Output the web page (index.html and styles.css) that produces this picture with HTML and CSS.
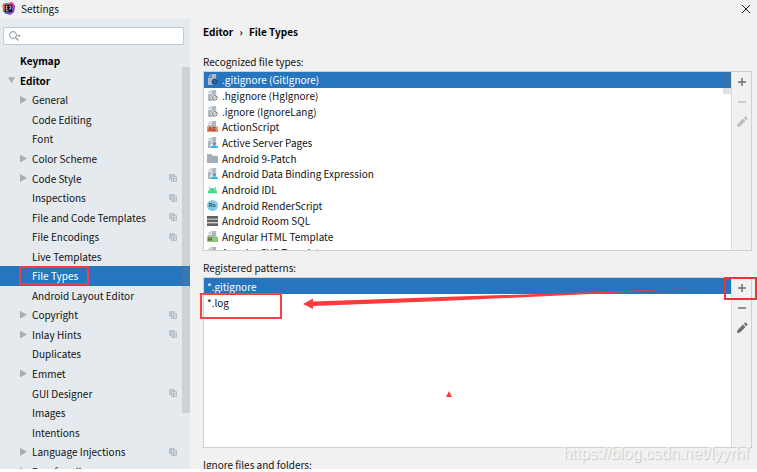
FILE: index.html
```html
<!DOCTYPE html>
<html lang="en">
<head>
  <meta charset="UTF-8">
  <meta name="viewport" content="width=device-width, initial-scale=1.0">
  <title>Settings</title>
  <link rel="stylesheet" href="styles.css">
</head>
<body>
  <!-- shared icons -->
  <svg class="sprite" aria-hidden="true">
    <symbol id="copy" viewBox="0 0 8 8">
      <path d="M0 0h6v2H2v4H0z" fill="#bcc5cc"/>
      <path d="M2.500 2.500h5v5h-5z" fill="#d3dae0" stroke="#b5bfc6"/>
      <path d="M4 4h2v1H4zM4 4h1v3H4z" fill="#a9b4bc"/>
    </symbol>
    <symbol id="page" viewBox="0 0 12 12">
      <path d="M5 0h5v12H1V4h4z" fill="#adb8c0"/>
      <path d="M4 0v3H1z" fill="#adb8c0"/>
    </symbol>
    <symbol id="ignored" viewBox="0 0 12 12">
      <use href="#page"/>
      <circle cx="8.500" cy="8.500" r="3.500" class="badge-back"/>
      <circle cx="8.500" cy="8.500" r="2.500" fill="none" class="badge-line"/>
      <path d="M6.800 10.200l3.400-3.400" class="badge-line"/>
    </symbol>
    <symbol id="person" viewBox="0 0 12 12">
      <use href="#page"/>
      <path d="M5 5h5v3h2v4H4V8h1z" fill="#fff"/>
      <circle cx="8" cy="7" r="2" fill="#7d929e"/>
      <path d="M4 12q0-3 4-3t4 3z" fill="#30b5e8"/>
    </symbol>
    <symbol id="pencil" viewBox="0 0 12 12">
      <path d="M1 11l.5-3L7 2.500 9.500 5 4 10.500zM7.800 1.800l1-1q.7-.6 1.400 0l1 1q.6.700 0 1.400l-1 1z" fill="currentColor"/>
    </symbol>
  </svg>

  <div class="window">
    <header class="titlebar">
      <svg class="logo" viewBox="0 0 14 14" aria-hidden="true">
        <path d="M1 2l5-1 4 4-6 8-3-3z" fill="#2f7ff0"/>
        <path d="M0 4l3-3 3 3-3 6z" fill="#f3702c"/>
        <path d="M7 1l4-1 3 4-1 7-4 3-5-2z" fill="#e8388c"/>
        <path d="M10 5l4-1-1 6-5 4-4-2z" fill="#7158e8"/>
        <path d="M3 3h8v8H3z" fill="#100c14"/>
        <path d="M4 4.500h2M5 4.500v3M4 7.500h2M7.500 4.500h2v3h-2M4 9.500h3" fill="none" stroke="#fff" stroke-width=".8"/>
      </svg>
      <h1>Settings</h1>
      <button class="close" aria-label="Close">
        <svg viewBox="0 0 10 10"><path d="M1 1l8 8M9 1l-8 8" stroke="#222"/></svg>
      </button>
    </header>

    <div class="body">
      <nav class="sidebar">
        <label class="search">
          <svg viewBox="0 0 14 12" aria-hidden="true">
            <circle cx="5" cy="5" r="3.500" fill="none" stroke="#8d979e"/>
            <path d="M7.500 7.500l3 3" stroke="#8d979e" stroke-width="1.200"/>
            <path d="M9 5h4l-2 2z" fill="#8d979e"/>
          </svg>
          <input type="text" aria-label="Search settings">
        </label>
        <div class="tree-wrap">
          <ul class="tree">
            <li><a class="top" href="#">Keymap</a></li>
            <li><a class="top open" href="#">Editor</a></li>
            <li><a class="closed" href="#">General</a></li>
            <li><a href="#">Code Editing</a></li>
            <li><a href="#">Font</a></li>
            <li><a class="closed" href="#">Color Scheme</a></li>
            <li><a class="closed" href="#">Code Style<svg><use href="#copy"/></svg></a></li>
            <li><a href="#">Inspections<svg><use href="#copy"/></svg></a></li>
            <li><a href="#">File and Code Templates<svg><use href="#copy"/></svg></a></li>
            <li><a href="#">File Encodings<svg><use href="#copy"/></svg></a></li>
            <li><a href="#">Live Templates</a></li>
            <li><a class="selected" href="#"><span class="marked">File Types</span></a></li>
            <li><a href="#">Android Layout Editor</a></li>
            <li><a class="closed" href="#">Copyright<svg><use href="#copy"/></svg></a></li>
            <li><a class="closed" href="#">Inlay Hints<svg><use href="#copy"/></svg></a></li>
            <li><a href="#">Duplicates</a></li>
            <li><a class="closed" href="#">Emmet</a></li>
            <li><a href="#">GUI Designer<svg><use href="#copy"/></svg></a></li>
            <li><a href="#">Images</a></li>
            <li><a href="#">Intentions</a></li>
            <li><a class="closed" href="#">Language Injections<svg><use href="#copy"/></svg></a></li>
            <li><a class="closed" href="#">Proofreading</a></li>
          </ul>
          <div class="scrollbar"></div>
        </div>
      </nav>

      <main class="content">
        <h2 class="breadcrumb">Editor <span>›</span> File Types</h2>

        <h3>Recognized file types:</h3>
        <section class="panel types">
          <div class="list-wrap">
            <ul class="list">
              <li class="selected"><svg><use href="#ignored"/></svg>.gitignore (GitIgnore)</li>
              <li><svg><use href="#ignored"/></svg>.hgignore (HgIgnore)</li>
              <li><svg><use href="#ignored"/></svg>.ignore (IgnoreLang)</li>
              <li><svg viewBox="0 0 12 12"><use href="#page"/><path d="M0 6h12v6H0z" fill="#f98b60"/><text x="1" y="11">AS</text></svg>ActionScript</li>
              <li><svg><use href="#person"/></svg>Active Server Pages</li>
              <li><svg viewBox="0 0 12 12"><path d="M0 1h5l1 2h6v8H0z" fill="#a3afb8"/></svg>Android 9-Patch</li>
              <li><svg><use href="#person"/></svg>Android Data Binding Expression</li>
              <li><svg viewBox="0 0 12 12"><path d="M1 10q0-3 2-4.500L2 3.500l.7-.4 1.100 1.700q2.200-.8 4.400 0l1.100-1.700.7.400L9 5.500q2 1.500 2 4.500z" fill="#3ddc84"/><path d="M3.500 7h1v1h-1zM7.500 7h1v1h-1z" fill="#fff"/></svg>Android IDL</li>
              <li><svg viewBox="0 0 12 12"><circle cx="6" cy="6" r="6" fill="#7fcbe6"/><text x="2" y="8">Rs</text></svg>Android RenderScript</li>
              <li><svg viewBox="0 0 12 12"><path d="M0 1h12v3H0zM0 5h12v3H0zM0 9h12v3H0z" fill="#616161"/></svg>Android Room SQL</li>
              <li><svg viewBox="0 0 12 12"><use href="#page"/><path d="M0 6h12v6H0z" fill="#8fca74"/><text x="1" y="11">H</text></svg>Angular HTML Template</li>
              <li><svg viewBox="0 0 12 12"><use href="#page"/></svg>Angular SVG Template</li>
            </ul>
            <div class="thumb"></div>
          </div>
          <div class="tools">
            <button aria-label="Add file type"><svg viewBox="0 0 12 12"><path d="M6 2v8M2 6h8" stroke="currentColor" stroke-width="1.500"/></svg></button>
            <button disabled aria-label="Remove file type"><svg viewBox="0 0 12 12"><path d="M2 6h8" stroke="currentColor" stroke-width="1.500"/></svg></button>
            <button disabled aria-label="Edit file type"><svg><use href="#pencil"/></svg></button>
          </div>
        </section>

        <h3>Registered patterns:</h3>
        <section class="panel patterns">
          <div class="list-wrap">
            <ul class="list">
              <li class="selected">*.gitignore</li>
              <li class="boxed">*.log</li>
            </ul>
            <svg class="arrow" viewBox="0 0 400 26" preserveAspectRatio="none" aria-hidden="true">
              <path d="M0 18l10-5.500v3L140 11 300 6l97-4-97 5.500L140 15 10 20v3z" fill="#fb3b3b"/>
            </svg>
            <svg class="mark" viewBox="0 0 6 6" aria-hidden="true"><path d="M3 0l3 6H0z" fill="#fb3b3b"/></svg>
          </div>
          <div class="tools">
            <button class="boxed-add" aria-label="Add pattern"><svg viewBox="0 0 12 12"><path d="M6 2v8M2 6h8" stroke="currentColor" stroke-width="1.500"/></svg></button>
            <button aria-label="Remove pattern"><svg viewBox="0 0 12 12"><path d="M2 6h8" stroke="currentColor" stroke-width="1.500"/></svg></button>
            <button aria-label="Edit pattern"><svg><use href="#pencil"/></svg></button>
          </div>
        </section>

        <h3>Ignore files and folders:</h3>
      </main>
    </div>
    <div class="watermark">https://blog.csdn.net/lyyrhf</div>
  </div>
</body>
</html>
```

FILE: styles.css
```css
*,
*::before,
*::after {
  box-sizing: border-box;
}

body {
  margin: 0;
  background: #fff;
  color: #111;
  font: 10px/15px "Noto Sans CJK SC", "Noto Sans", sans-serif;
}

ul,
h1,
h2,
h3 {
  margin: 0;
  padding: 0;
  font-size: 10px;
  font-weight: normal;
  list-style: none;
}

button {
  display: flex;
  padding: 0;
  border: 0;
  background: none;
  color: #6e6e6e;
}

button:disabled {
  color: #bdbdbd;
}

.sprite {
  position: absolute;
  width: 0;
  height: 0;
}

.window {
  position: relative;
  display: flex;
  flex-direction: column;
  height: calc(100vh - 3px);
  overflow: hidden;
  background: #f1f1f1;
}

.titlebar {
  display: flex;
  flex: none;
  align-items: center;
  gap: 6px;
  height: 19px;
  padding: 0 6px 2px 2px;
}

.logo {
  width: 13px;
  height: 13px;
}

.close {
  margin-left: auto;
}

.close svg {
  width: 10px;
  height: 10px;
}

.body {
  display: flex;
  flex: 1;
  min-height: 0;
}

/* sidebar */
.sidebar {
  display: flex;
  flex: none;
  flex-direction: column;
  width: 190px;
  padding-top: 8px;
  background: #e5eaee;
}

.search {
  display: flex;
  flex: none;
  align-items: center;
  height: 18px;
  margin: 0 6px 6px 3px;
  padding-left: 4px;
  border: 1px solid #c4c8cb;
  border-radius: 2px;
  background: #fff;
}

.search svg {
  width: 14px;
  height: 12px;
}

.search input {
  flex: 1;
  min-width: 0;
  padding: 0 4px;
  border: 0;
  outline: none;
  background: none;
  font: inherit;
}

.tree-wrap {
  position: relative;
  flex: 1;
  min-height: 0;
  overflow: hidden;
}

.tree {
  display: grid;
  grid-auto-rows: 1fr;
  height: 430px;
}

.tree a {
  position: relative;
  display: flex;
  align-items: center;
  height: 100%;
  padding: 0 13px 0 32px;
  color: inherit;
  text-decoration: none;
}

.tree a.top {
  padding-left: 20px;
  color: #000;
  font-weight: bold;
}

.tree a svg {
  width: 8px;
  height: 8px;
  margin-left: auto;
}

.tree .closed::before,
.tree .open::before {
  position: absolute;
  left: 20px;
  width: 7px;
  height: 8px;
  background: #a9adaf;
  clip-path: polygon(0 0, 100% 50%, 0 100%);
  content: "";
}

.tree .open::before {
  left: 8px;
  height: 6px;
  clip-path: polygon(0 0, 100% 0, 50% 100%);
}

.tree a.selected,
.list .selected {
  background: #2675bf;
  color: #fff;
}

.marked {
  position: relative;
}

.marked::after {
  position: absolute;
  inset: -2px -11px -2px -13px;
  border: 2px solid #e8404a;
  content: "";
}

.scrollbar {
  position: absolute;
  top: 16px;
  right: 0;
  width: 8px;
  height: 346px;
  background: rgba(120, 125, 135, 0.22);
}

/* right side */
.content {
  display: flex;
  flex: 1;
  flex-direction: column;
  min-width: 0;
  padding: 5px 5px 0 13px;
}

.content h3 {
  flex: none;
  height: 17px;
}

.breadcrumb {
  flex: none;
  height: 30px;
  color: #000;
  font-weight: bold;
}

.breadcrumb span {
  margin: 0 4px;
}

.panel {
  display: flex;
  flex: none;
  height: 180px;
  margin-bottom: 9px;
  border: 1px solid #d0d0d0;
}

.patterns {
  height: 171px;
}

.list-wrap {
  position: relative;
  flex: 1;
  min-width: 0;
  background: #fff;
}

.types .list-wrap {
  overflow: hidden;
}

.list {
  --badge-back: #fff;
  --badge-line: #5e666c;
  display: grid;
  grid-auto-rows: 1fr;
}

.types .list {
  height: 188px;
}

.patterns .list {
  height: 32px;
}

.list li {
  position: relative;
  display: flex;
  align-items: center;
  gap: 4px;
  padding-left: 3px;
}

.list svg {
  width: 11px;
  height: 11px;
}

.list text {
  fill: #44423f;
  font: bold 6px "Liberation Sans", sans-serif;
}

.list .selected {
  --badge-back: #2675bf;
  --badge-line: #24405c;
}

.badge-back {
  fill: var(--badge-back);
}

.badge-line {
  stroke: var(--badge-line);
}

.thumb {
  position: absolute;
  top: 0;
  right: 0;
  width: 8px;
  height: 22px;
  background: rgba(110, 110, 110, 0.2);
}

.tools {
  display: flex;
  flex: none;
  flex-direction: column;
  align-items: center;
  gap: 8px;
  width: 20px;
  padding-top: 4px;
  border-left: 1px solid #dcdcdc;
}

.tools button {
  position: relative;
}

.tools svg {
  width: 12px;
  height: 12px;
}

/* red annotations */
.boxed::after {
  position: absolute;
  top: -1px;
  left: -4px;
  width: 82px;
  height: 26px;
  border: 2px solid #fb4040;
  content: "";
}

.boxed-add::after {
  position: absolute;
  inset: -5px -9px -6px -12px;
  border: 2px solid #ee3338;
  content: "";
}

.arrow {
  position: absolute;
  top: 8px;
  left: 99px;
  width: calc(100% - 130px);
  height: 26px;
}

.mark {
  position: absolute;
  top: 113px;
  left: 46%;
  width: 6px;
  height: 6px;
}

.watermark {
  position: absolute;
  right: 8px;
  bottom: 5px;
  color: #f4f4f4;
  font: 16px/20px "Liberation Sans", sans-serif;
  text-shadow: 1px 1px 1px #c4c4c4;
}
```
